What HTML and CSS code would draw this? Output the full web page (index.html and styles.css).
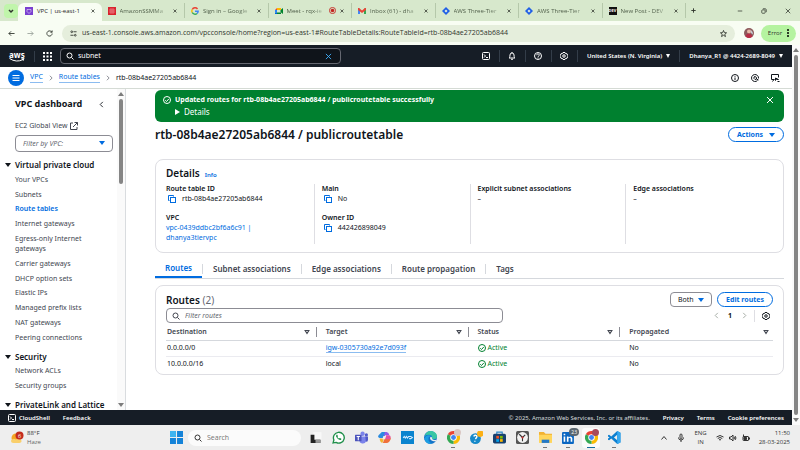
FILE: index.html
```
<!DOCTYPE html>
<html lang="en">
<head>
    <meta charset="UTF-8">
    <meta name="viewport" content="width=device-width, initial-scale=1.0">
    <title>VPC | us-east-1</title>
    <link rel="stylesheet" href="styles.css">
</head>
<body>
    <!-- shared icons -->
    <svg class="sprite" aria-hidden="true">
        <symbol id="i-close" viewBox="0 0 16 16"><path d="M2 2l12 12M14 2L2 14"/></symbol>
        <symbol id="i-search" viewBox="0 0 16 16"><circle cx="7" cy="7" r="5"/><path d="M11 11l4 4"/></symbol>
        <symbol id="i-right" viewBox="0 0 16 16"><path d="M5 2l6 6-6 6"/></symbol>
        <symbol id="i-left" viewBox="0 0 16 16"><path d="M11 2L5 8l6 6"/></symbol>
        <symbol id="i-gear" viewBox="0 0 16 16"><path d="M6 1h4l1 2 3 .5 1.500 3.500-1 1 1 1-1.500 3.500-3 .5-1 2H6l-1-2-3-.5L.5 9l1-1-1-1L2 3.500 5 3z"/><circle cx="8" cy="8" r="2.500"/></symbol>
        <symbol id="i-shell" viewBox="0 0 16 16"><rect x="1" y="1" width="14" height="14" rx="2"/><path d="M4 5l3 3-3 3M8 11h4"/></symbol>
        <symbol id="i-copy" viewBox="0 0 16 16"><path d="M3 11H1V1h10v2"/><rect x="5" y="5" width="10" height="10"/></symbol>
        <symbol id="i-check" viewBox="0 0 16 16"><circle cx="8" cy="8" r="7"/><path d="M4.500 8.500L7 11l4.500-5"/></symbol>
        <symbol id="i-sort" viewBox="0 0 16 16"><path d="M3 4h10l-5 8z"/></symbol>
        <symbol id="i-chrome" viewBox="0 0 16 16">
            <path fill="#ea4335" d="M8 8L1.070 4A8 8 0 0 1 14.930 4z"/>
            <path fill="#fbbc04" d="M8 8l6.930-4A8 8 0 0 1 8 16z"/>
            <path fill="#34a853" d="M8 8v8A8 8 0 0 1 1.070 4z"/>
            <circle cx="8" cy="8" r="4" fill="#fff"/><circle cx="8" cy="8" r="3" fill="#4285f4"/>
        </symbol>
        <symbol id="i-jira" viewBox="0 0 16 16"><path fill="#1f5fe6" d="M8 0l8 8-8 8-8-8z"/><path fill="#e4f0e0" d="M8 5l3 3-3 3-3-3z"/></symbol>
    </svg>

    <!-- browser tabs -->
    <header class="tab-strip">
        <button class="tab-search" aria-label="Search tabs"><svg class="icon bold" viewBox="0 0 16 16"><path d="M4 6l4 4 4-4"/></svg></button>
        <div class="browser-tabs">
            <div class="browser-tab current">
                <svg class="favicon" viewBox="0 0 16 16"><rect width="16" height="16" fill="#7a3fd0"/><path d="M4 5h8v4l-4 4-4-4z" fill="none" stroke="#fff"/></svg>
                <span>VPC | us-east-1</span>
                <button aria-label="Close"><svg class="icon bold"><use href="#i-close"/></svg></button>
            </div>
            <div class="browser-tab">
                <svg class="favicon" viewBox="0 0 16 16"><rect width="16" height="16" fill="#d9232e"/><path d="M4 4h8v8H4zM4 8h8M8 4v8" fill="none" stroke="#f6b0b5"/></svg>
                <span>AmazonSSMMa</span>
                <button aria-label="Close"><svg class="icon bold"><use href="#i-close"/></svg></button>
            </div>
            <div class="browser-tab">
                <svg class="favicon" viewBox="0 0 16 16" fill="none" stroke-width="3"><path stroke="#ea4335" d="M13 4A6.300 6.300 0 0 0 2.500 5"/><path stroke="#fbbc04" d="M2.500 5a6.300 6.300 0 0 0 0 6"/><path stroke="#34a853" d="M2.500 11a6.300 6.300 0 0 0 9.500 2"/><path stroke="#4285f4" d="M12 13a6 6 0 0 0 2.300-4.500H8"/></svg>
                <span>Sign in – Google</span>
                <button aria-label="Close"><svg class="icon bold"><use href="#i-close"/></svg></button>
            </div>
            <div class="browser-tab">
                <svg class="favicon" viewBox="0 0 16 16"><path fill="#00832d" d="M3 11h9v3H3zM11 6l5-4v12l-5-4z"/><path fill="#ffba00" d="M4 2h8v4H4z"/><path fill="#2684fc" d="M0 6h4v5H0z"/><path fill="#ea4335" d="M4 2v4H0z"/><path fill="#0066da" d="M0 11h4v3H0z"/></svg>
                <span>Meet - rqx-ie</span>
                <svg class="rec" viewBox="0 0 16 16"><circle cx="8" cy="8" r="7" fill="none" stroke="#c5221f" stroke-width="2"/><circle cx="8" cy="8" r="4" fill="#c5221f"/></svg>
                <button aria-label="Close"><svg class="icon bold"><use href="#i-close"/></svg></button>
            </div>
            <div class="browser-tab">
                <svg class="favicon" viewBox="0 0 16 16"><path fill="#4285f4" d="M0 3h4v11H0z"/><path fill="#34a853" d="M12 3h4v11h-4z"/><path fill="#ea4335" d="M0 2h2l6 5 6-5h2v4l-8 6-8-6z"/></svg>
                <span>Inbox (61) - dha</span>
                <button aria-label="Close"><svg class="icon bold"><use href="#i-close"/></svg></button>
            </div>
            <div class="browser-tab">
                <svg class="favicon"><use href="#i-jira"/></svg>
                <span>AWS Three-Tier</span>
                <button aria-label="Close"><svg class="icon bold"><use href="#i-close"/></svg></button>
            </div>
            <div class="browser-tab">
                <svg class="favicon"><use href="#i-jira"/></svg>
                <span>AWS Three-Tier</span>
                <button aria-label="Close"><svg class="icon bold"><use href="#i-close"/></svg></button>
            </div>
            <div class="browser-tab">
                <span class="favicon dev">DEV</span>
                <span>New Post - DEV</span>
                <button aria-label="Close"><svg class="icon bold"><use href="#i-close"/></svg></button>
            </div>
        </div>
        <button class="new-tab" aria-label="New tab"><svg class="icon bold" viewBox="0 0 16 16"><path d="M8 1v14M1 8h14"/></svg></button>
        <div class="window-buttons">
            <button aria-label="Minimize"><svg class="icon" viewBox="0 0 16 16"><path d="M2 8h12"/></svg></button>
            <button aria-label="Restore"><svg class="icon" viewBox="0 0 16 16"><rect x="2" y="5" width="9" height="9" rx="2"/><path d="M5 2h6q3 0 3 3v6"/></svg></button>
            <button aria-label="Close window"><svg class="icon"><use href="#i-close"/></svg></button>
        </div>
    </header>

    <div class="address-bar">
        <button aria-label="Back"><svg class="icon" viewBox="0 0 16 16"><path d="M15 8H2M7 3L2 8l5 5"/></svg></button>
        <button class="disabled" aria-label="Forward"><svg class="icon" viewBox="0 0 16 16"><path d="M1 8h13M9 3l5 5-5 5"/></svg></button>
        <button aria-label="Reload"><svg class="icon" viewBox="0 0 16 16"><path d="M14 8a6 6 0 1 1-2-4.500L14 5M14 1v4h-4"/></svg></button>
        <div class="url">
            <svg class="icon" viewBox="0 0 16 16"><circle cx="4" cy="4" r="2"/><path d="M8 4h7M1 12h7"/><circle cx="12" cy="12" r="2"/></svg>
            <input type="text" aria-label="Address" value="us-east-1.console.aws.amazon.com/vpcconsole/home?region=us-east-1#RouteTableDetails:RouteTableId=rtb-08b4ae27205ab6844">
            <svg class="icon" viewBox="0 0 16 16"><path d="M8 1l2 5 5 .4-4 3.300L12.500 15 8 12l-4.500 3L5 9.700 1 6.400 6 6z"/></svg>
        </div>
        <svg class="avatar" viewBox="0 0 20 20"><circle cx="10" cy="10" r="10" fill="#8d5a5c"/><circle cx="10" cy="7" r="4" fill="#e7b9a6"/><path d="M3 17q2-7 7-6t7 6q-7 6-14 0z" fill="#b72d45"/><path d="M13 3q5 4 5 10l-4-3z" fill="#c6ced6"/></svg>
        <button class="error-button">Error <svg viewBox="0 0 4 16"><circle cx="2" cy="2" r="2"/><circle cx="2" cy="8" r="2"/><circle cx="2" cy="14" r="2"/></svg></button>
    </div>

    <div class="viewport">
        <div class="console">
            <nav class="aws-nav">
                <a class="aws-logo" href="#" aria-label="AWS home">
                    <span>aws</span>
                    <svg viewBox="0 0 32 8"><path d="M1 1q14 9 27 2" fill="none" stroke="#fff" stroke-width="2"/><path d="M24 1l7-1-2 6z" fill="#fff"/></svg>
                </a>
                <button class="services" aria-label="Services">
                    <svg viewBox="0 0 18 18"><path d="M0 0h4v4H0zM7 0h4v4H7zM14 0h4v4h-4zM0 7h4v4H0zM7 7h4v4H7zM14 7h4v4h-4zM0 14h4v4H0zM7 14h4v4H7zM14 14h4v4h-4z"/></svg>
                </button>
                <div class="aws-search">
                    <svg class="icon"><use href="#i-search"/></svg>
                    <input type="text" aria-label="Search services" value="subnet">
                    <button aria-label="Clear"><svg class="icon"><use href="#i-close"/></svg></button>
                </div>
                <div class="aws-tools">
                    <button aria-label="CloudShell"><svg class="icon"><use href="#i-shell"/></svg></button>
                    <button aria-label="Notifications"><svg class="icon" viewBox="0 0 16 16"><path d="M3 11q1-2 1-5a4 4 0 0 1 8 0q0 3 1 5l1 1H2zM6 14.500h4M8 0v2"/></svg></button>
                    <button aria-label="Help"><svg class="icon" viewBox="0 0 16 16"><circle cx="8" cy="8" r="7"/><path d="M5.500 6.500a2.500 2.500 0 1 1 3.500 2q-1 .5-1 1.500M8 11v2"/></svg></button>
                    <button aria-label="Settings"><svg class="icon"><use href="#i-gear"/></svg></button>
                    <button class="menu">United States (N. Virginia)<i class="caret"></i></button>
                    <button class="menu">Dhanya_R1 @ 4424-2689-8049<i class="caret"></i></button>
                </div>
            </nav>

            <div class="breadcrumbs">
                <button class="menu-toggle" aria-label="Open navigation"><svg class="icon" viewBox="0 0 16 16"><path d="M1 3h14M1 8h14M1 13h14"/></svg></button>
                <a href="#">VPC</a>
                <svg class="icon"><use href="#i-right"/></svg>
                <a href="#">Route tables</a>
                <svg class="icon"><use href="#i-right"/></svg>
                <span>rtb-08b4ae27205ab6844</span>
                <div class="page-tools">
                    <button aria-label="Info"><svg class="icon" viewBox="0 0 16 16"><circle cx="8" cy="8" r="7"/><path d="M8 7v5M8 4v1.500"/></svg></button>
                    <button aria-label="Resources"><svg class="icon" viewBox="0 0 16 16"><path d="M13 13A7 7 0 1 1 15 9M8 5l3 2v3l-3 1-2-2V6zM15 12l-4-2"/></svg></button>
                    <button aria-label="Tools"><svg class="icon" viewBox="0 0 16 16"><path d="M7 11H1V1h14v6M3 15l3-4M9 8v5l2-2h4zM13 15h4"/></svg></button>
                </div>
            </div>

            <div class="workspace">
                <aside class="sidebar">
                    <div class="sidebar-content">
                        <div class="sidebar-title">
                            <h2>VPC dashboard</h2>
                            <button aria-label="Collapse"><svg class="icon"><use href="#i-left"/></svg></button>
                        </div>
                        <a class="global-view" href="#">EC2 Global View <svg class="icon" viewBox="0 0 16 16"><path d="M6 2H1v13h13v-5M9 1h6v6M15 1L6 10"/></svg></a>
                        <div class="select vpc-filter">
                            <select aria-label="Filter by VPC"><option>Filter by VPC:</option></select>
                        </div>
                        <nav class="side-nav">
                            <h3>Virtual private cloud</h3>
                            <ul>
                                <li><a href="#">Your VPCs</a></li>
                                <li><a href="#">Subnets</a></li>
                                <li><a class="active" href="#">Route tables</a></li>
                                <li><a href="#">Internet gateways</a></li>
                                <li><a href="#">Egress-only Internet gateways</a></li>
                                <li><a href="#">Carrier gateways</a></li>
                                <li><a href="#">DHCP option sets</a></li>
                                <li><a href="#">Elastic IPs</a></li>
                                <li><a href="#">Managed prefix lists</a></li>
                                <li><a href="#">NAT gateways</a></li>
                                <li><a href="#">Peering connections</a></li>
                            </ul>
                            <h3>Security</h3>
                            <ul>
                                <li><a href="#">Network ACLs</a></li>
                                <li><a href="#">Security groups</a></li>
                            </ul>
                            <h3>PrivateLink and Lattice</h3>
                        </nav>
                    </div>
                    <div class="scrollbar side-scroll"><i class="up"></i><i class="thumb"></i><i class="down"></i></div>
                </aside>

                <main class="content">
                    <div class="flash">
                        <svg class="icon"><use href="#i-check"/></svg>
                        <div class="flash-text">
                            <strong>Updated routes for rtb-08b4ae27205ab6844 / publicroutetable successfully</strong>
                            <button>Details</button>
                        </div>
                        <button aria-label="Dismiss"><svg class="icon"><use href="#i-close"/></svg></button>
                    </div>

                    <div class="page-header">
                        <h1>rtb-08b4ae27205ab6844 / publicroutetable</h1>
                        <button class="button">Actions<i class="caret"></i></button>
                    </div>

                    <section class="card details">
                        <div class="card-title"><h2>Details</h2><a href="#">Info</a></div>
                        <div class="detail-grid">
                            <dl>
                                <dt>Route table ID</dt>
                                <dd><svg class="icon copy"><use href="#i-copy"/></svg>rtb-08b4ae27205ab6844</dd>
                                <dt>VPC</dt>
                                <dd><a href="#">vpc-0439ddbc2bf6a6c91 |<br>dhanya3tiervpc</a></dd>
                            </dl>
                            <dl>
                                <dt>Main</dt>
                                <dd><svg class="icon copy"><use href="#i-copy"/></svg>No</dd>
                                <dt>Owner ID</dt>
                                <dd><svg class="icon copy"><use href="#i-copy"/></svg>442426898049</dd>
                            </dl>
                            <dl>
                                <dt>Explicit subnet associations</dt>
                                <dd>–</dd>
                            </dl>
                            <dl>
                                <dt>Edge associations</dt>
                                <dd>–</dd>
                            </dl>
                        </div>
                    </section>

                    <div class="tabs" role="tablist">
                        <button class="active" role="tab">Routes</button>
                        <button role="tab">Subnet associations</button>
                        <button role="tab">Edge associations</button>
                        <button role="tab">Route propagation</button>
                        <button role="tab">Tags</button>
                    </div>

                    <section class="card routes">
                        <div class="routes-header">
                            <h2>Routes <span>(2)</span></h2>
                            <div class="select both">
                                <select aria-label="Route type"><option>Both</option></select>
                            </div>
                            <button class="button">Edit routes</button>
                        </div>
                        <div class="routes-filter">
                            <div class="filter-input">
                                <svg class="icon"><use href="#i-search"/></svg>
                                <input type="text" aria-label="Filter routes" placeholder="Filter routes">
                            </div>
                            <div class="pager">
                                <button class="disabled" aria-label="Previous"><svg class="icon"><use href="#i-left"/></svg></button>
                                <button>1</button>
                                <button class="disabled" aria-label="Next"><svg class="icon"><use href="#i-right"/></svg></button>
                                <button class="prefs" aria-label="Preferences"><svg class="icon"><use href="#i-gear"/></svg></button>
                            </div>
                        </div>
                        <table>
                            <thead>
                                <tr>
                                    <th><div>Destination<svg class="icon bold"><use href="#i-sort"/></svg></div></th>
                                    <th><div>Target<svg class="icon bold"><use href="#i-sort"/></svg></div></th>
                                    <th><div>Status<svg class="icon bold"><use href="#i-sort"/></svg></div></th>
                                    <th><div>Propagated<svg class="icon bold"><use href="#i-sort"/></svg></div></th>
                                </tr>
                            </thead>
                            <tbody>
                                <tr>
                                    <td>0.0.0.0/0</td>
                                    <td><a href="#">igw-0305730a92e7d093f</a></td>
                                    <td><span class="status"><svg class="icon"><use href="#i-check"/></svg>Active</span></td>
                                    <td>No</td>
                                </tr>
                                <tr>
                                    <td>10.0.0.0/16</td>
                                    <td>local</td>
                                    <td><span class="status"><svg class="icon"><use href="#i-check"/></svg>Active</span></td>
                                    <td>No</td>
                                </tr>
                            </tbody>
                        </table>
                    </section>
                </main>
            </div>

            <footer class="aws-footer">
                <button><svg class="icon"><use href="#i-shell"/></svg>CloudShell</button>
                <button>Feedback</button>
                <span>© 2025, Amazon Web Services, Inc. or its affiliates.</span>
                <a href="#">Privacy</a>
                <a href="#">Terms</a>
                <a href="#">Cookie preferences</a>
            </footer>
        </div>
        <div class="scrollbar page-scroll"><i class="up"></i><i class="thumb"></i><i class="down"></i></div>
    </div>

    <!-- windows taskbar -->
    <footer class="taskbar">
        <div class="weather">
            <svg viewBox="0 0 28 28"><circle cx="12" cy="14" r="9" fill="#f5a623"/><path d="M2 19q4-6 10-2 6-5 10 0 3 6-3 7H7q-5 0-5-5z" fill="#f9cf6b"/><circle cx="19" cy="9" r="8" fill="#c42b1c"/><text x="19" y="13" font-size="11" text-anchor="middle" fill="#fff">6</text></svg>
            <div>88°F<br><span>Haze</span></div>
        </div>
        <div class="apps">
            <button class="app" aria-label="Start"><svg viewBox="0 0 24 24"><path fill="#1583d8" d="M0 0h11v11H0zM13 0h11v11H13zM0 13h11v11H0zM13 13h11v11H13z"/><path fill="#3fb4f0" d="M0 0h11v11H0z"/></svg></button>
            <div class="task-search"><svg class="icon"><use href="#i-search"/></svg><input type="text" aria-label="Search" placeholder="Search"></div>
            <button class="app" aria-label="Task view"><svg viewBox="0 0 24 24"><path fill="#f8f8f8" d="M8 2h15v14H8z"/><path fill="#222" d="M3 7h7v9h11v6H3z"/><path fill="#999" d="M12 16h9v6h-9z"/></svg></button>
            <button class="app" aria-label="WhatsApp"><svg viewBox="0 0 24 24"><path d="M2 22l1.500-5.500A10 10 0 1 1 7.500 21z" fill="#fff" stroke="#1f8f4a" stroke-width="2.500"/><path d="M8 7q-2 3 2 7t7 2l0-2-3-1-1 1q-2-1-3-3l1-1-1-3z" fill="#1f8f4a"/></svg></button>
            <button class="app" aria-label="Teams"><svg viewBox="0 0 24 24"><circle cx="14" cy="5" r="4" fill="#7b83eb"/><circle cx="21" cy="7" r="3" fill="#5059c9"/><path fill="#7b83eb" d="M8 10h13v8q-2 6-8 5-5-1-5-5z"/><path fill="#5059c9" d="M19 10h5v6q0 4-4 4z"/><rect y="7" width="12" height="12" rx="1" fill="#4b53bc"/><path d="M3 10h6M6 10v7" stroke="#fff" stroke-width="2"/></svg></button>
            <button class="app" aria-label="Copilot"><svg viewBox="0 0 24 24"><path fill="#2a8be0" d="M7 2h8l-4 11H3q-4-1-2-5z"/><path fill="#8f5be8" d="M13 2h3q4 1 5 6h-8l-3 3z"/><path fill="#f0703a" d="M17 22H9l4-11h8q4 1 2 5-2 5-6 6z"/><path fill="#f2b52e" d="M3 14h8l-3 8q-4 0-5-8z"/><path fill="#e452a0" d="M15 8h6q4 2 1 7h-9z"/><path fill="#eee" d="M10 9h5l-2 6H8z"/></svg></button>
            <button class="app" aria-label="Vendor app"><svg viewBox="0 0 24 24"><path fill="#0a84cf" d="M0 0h24v24H0z"/><path d="M4 13l2-3 2 3 2-3 2 3 2-3h4l3 2-3 2h-3" fill="none" stroke="#d3ecff" stroke-width="2"/></svg></button>
            <button class="app" aria-label="Edge"><svg viewBox="0 0 24 24"><circle cx="12" cy="12" r="12" fill="#1473c8"/><path d="M1 9Q5-1 14 0q10 2 10 10 0 5-6 5-4 0-3-3 0-5-6-5-5 0-8 2z" fill="#38c6a4"/><path d="M9 11q-3 9 6 12-11 2-14-8 1-7 8-7 5 0 6 4-3-3-6-1z" fill="#1b9de2"/><path d="M11 12q0 6 7 7h4l1-3q-9 2-8-4-2-2-4 0z" fill="#eee"/></svg></button>
            <button class="app open" aria-label="Chrome"><svg><use href="#i-chrome"/></svg><i class="mini"></i></button>
            <button class="app" aria-label="Support"><svg viewBox="0 0 24 24"><circle cx="10" cy="14" r="10" fill="#1689c9"/><path d="M7 10q1-3 4-2t1 4l-2 3M9 18v2" stroke="#fff" stroke-width="2.500" fill="none"/><circle cx="19" cy="5" r="6" fill="#fbb016"/></svg></button>
            <button class="app" aria-label="Store"><svg viewBox="0 0 24 24"><path d="M7 6V2h10v4" fill="none" stroke="#2b88c8" stroke-width="2"/><rect y="5" width="24" height="18" rx="3" fill="#17406f"/><path fill="#f25022" d="M6 9h5v5H6z"/><path fill="#7fba00" d="M13 9h5v5h-5z"/><path fill="#00a4ef" d="M6 15h5v5H6z"/><path fill="#ffb900" d="M13 15h5v5h-5z"/></svg></button>
            <button class="app" aria-label="Clock"><svg viewBox="0 0 24 24"><rect width="24" height="24" rx="3" fill="#555"/><circle cx="12" cy="12" r="10" fill="#f2f2f2"/><path d="M6 6l6 6 5-5M12 12v7" stroke="#333" stroke-width="2" fill="none"/><circle cx="12" cy="12" r="2" fill="#c33"/></svg></button>
            <button class="app open" aria-label="File Explorer"><svg viewBox="0 0 24 24"><path fill="#f2b233" d="M0 2h9l3 3h12v6H0z"/><path fill="#ffd55c" d="M0 7h24v15H0z"/><path fill="#2378c8" d="M5 16h14v6H5z"/></svg></button>
            <button class="app open" aria-label="LinkedIn"><svg viewBox="0 0 24 24"><rect y="2" width="22" height="22" rx="2" fill="#0a66c2"/><path fill="#fff" d="M3 10h3v10H3zM3 5h3v3H3zM9 10h3v2q5-4 7 1v7h-3v-6q-2-3-4 0v6H9z"/></svg><span class="badge">23</span></button>
            <button class="app open focused" aria-label="Chrome"><svg><use href="#i-chrome"/></svg><i class="mini red"></i></button>
            <button class="app open" aria-label="VS Code"><svg viewBox="0 0 24 24"><path fill="#0d7fd0" d="M17 0l6 3v18l-6 3L6 14l-4 3-2-1v-2l3-2-3-2V8l2-1 4 3zM17 7l-6 5 6 5z" fill-rule="evenodd"/><path fill="#36a9f0" d="M17 0l6 3v18l-6 3z"/></svg></button>
        </div>
        <div class="tray">
            <button aria-label="Hidden icons"><svg class="icon" viewBox="0 0 16 16"><path d="M3 11l5-6 5 6"/></svg></button>
            <svg class="icon" viewBox="0 0 16 16"><rect x="6" y="0" width="4" height="9" rx="2"/><path d="M3 7q0 5 5 5t5-5M8 12v4"/></svg>
            <span class="lang">ENG<br>IN</span>
            <div class="tray-group">
                <svg class="icon" viewBox="0 0 16 16"><path d="M1 6q7-6 14 0M3.500 9q4.500-4 9 0M6 12q2-2 4 0"/></svg>
                <svg class="icon" viewBox="0 0 16 16"><path d="M1 6h3l4-4v12l-4-4H1zM10 6q2 2 0 4M12 4q4 4 0 8"/></svg>
                <svg class="icon" viewBox="0 0 16 16"><rect x="2" y="5" width="11" height="8" rx="1"/><path d="M4 7h5v4H4z" fill="currentColor"/><path d="M15 7v4M3 1v5"/></svg>
            </div>
            <span class="clock">11:50<br>28-03-2025</span>
        </div>
    </footer>
</body>
</html>
```
FILE: styles.css
```
* {
    box-sizing: border-box;
}
body {
    margin: 0;
    height: 100vh;
    display: flex;
    flex-direction: column;
    overflow: hidden;
    background: #fff;
    color: #0f141a;
    font-family: "Noto Sans", "Open Sans", sans-serif;
    font-size: 7px;
    line-height: 10px;
}
h1, h2, h3, ul, dl, dd {
    margin: 0;
    padding: 0;
}
h1, h2, h3 {
    font-weight: 600;
}
ul {
    list-style: none;
}
button, input, select {
    margin: 0;
    padding: 0;
    border: 0;
    background: none;
    color: inherit;
    font: inherit;
}
input, select {
    min-width: 0;
    outline: none;
}
button {
    display: flex;
    align-items: center;
    justify-content: center;
    white-space: nowrap;
    cursor: pointer;
}
a {
    color: #006ce0;
    text-decoration: none;
}
.sprite {
    display: none;
}
.icon {
    width: 8px;
    height: 8px;
    flex: none;
    fill: none;
    stroke: currentColor;
    stroke-width: 2;
    overflow: visible;
}
.icon.bold {
    stroke-width: 3;
}
.disabled {
    color: #9aa29a;
}
.caret {
    border: 3px solid transparent;
    border-top: 5px solid currentColor;
    border-bottom: 0;
}

/* browser chrome */
.tab-strip {
    display: flex;
    align-items: center;
    flex: none;
    height: 21px;
    padding-left: 4px;
    background: #d7e8cc;
    color: #30362e;
    font-family: "Open Sans", sans-serif;
    font-size: 6px;
}
.tab-search {
    width: 14px;
    height: 14px;
    border-radius: 4px;
    background: #c0f5ab;
}
.browser-tabs {
    display: flex;
    flex: 0 1 668px;
    align-self: stretch;
    min-width: 0;
}
.browser-tab {
    display: flex;
    align-items: center;
    flex: 1 1 0;
    min-width: 0;
    margin-top: 3px;
    margin-bottom: 3px;
    padding: 0 7px 0 6px;
    gap: 4px;
    border-right: 1px solid #b5c8aa;
}
.browser-tab.current {
    margin-bottom: 0;
    padding-left: 7px;
    padding-bottom: 3px;
    border: 0;
    border-radius: 6px 6px 0 0;
    background: #f8fdf3;
}
.browser-tab .icon {
    width: 4px;
    height: 4px;
}
.browser-tab span:not(.favicon) {
    flex: 1;
    white-space: nowrap;
    color: #51604b;
    mask-image: linear-gradient(90deg, #000 70%, transparent);
}
.browser-tab.current span {
    color: #1d231b;
    mask-image: none;
}
.favicon {
    width: 8px;
    height: 8px;
    flex: none;
}
.dev {
    background: #111;
    color: #fff;
    font-size: 4px;
    font-weight: bold;
    line-height: 8px;
    text-align: center;
}
.rec {
    width: 7px;
    height: 7px;
    flex: none;
}
.new-tab {
    margin-left: 5px;
}
.new-tab .icon {
    width: 5px;
    height: 5px;
}
.window-buttons {
    display: flex;
    margin-left: auto;
}
.window-buttons button {
    width: 24px;
}
.window-buttons .icon {
    width: 6px;
    height: 6px;
}
.address-bar {
    display: flex;
    align-items: center;
    flex: none;
    height: 24px;
    padding: 0 4px 0 2px;
    background: #f8fdf3;
    color: #30362e;
    font-family: "Open Sans", sans-serif;
}
.address-bar > button:not(.error-button) {
    width: 19px;
}
.address-bar .icon {
    width: 7px;
    height: 7px;
}
.url {
    display: flex;
    align-items: center;
    flex: 1;
    height: 17px;
    margin-left: 3px;
    padding: 0 8px;
    gap: 5px;
    border-radius: 9px;
    background: #e5eedc;
}
.url input {
    flex: 1;
}
.avatar {
    width: 10px;
    height: 10px;
    margin: 0 7px 0 9px;
}
.error-button {
    width: 35px;
    height: 17px;
    gap: 5px;
    border-radius: 9px;
    background: #b5f3a0;
    font-size: 6px;
}
.error-button svg {
    width: 2px;
    height: 8px;
}

/* page area */
.viewport {
    display: flex;
    flex: 1;
    min-height: 0;
}
.console {
    display: flex;
    flex-direction: column;
    flex: 1;
    min-width: 0;
}
.scrollbar {
    display: flex;
    flex-direction: column;
    align-items: center;
    flex: none;
    width: 8px;
    padding: 3px 0;
    background: #fafafa;
}
.scrollbar i {
    border: 3px solid transparent;
}
.scrollbar .up {
    border-top: 0;
    border-bottom: 4px solid #7c7c7c;
}
.scrollbar .down {
    margin-top: auto;
    border-top: 4px solid #7c7c7c;
    border-bottom: 0;
}
.scrollbar .thumb {
    width: 4px;
    margin-top: 3px;
    border: 0;
    border-radius: 2px;
    background: #858585;
}
.page-scroll .thumb {
    flex: 1;
    margin-bottom: 3px;
}
.side-scroll .thumb {
    flex: 0 0 27%;
}

.aws-nav {
    display: flex;
    align-items: center;
    flex: none;
    height: 22px;
    padding-left: 9px;
    background: #161d26;
    color: #fff;
}
.aws-logo {
    display: flex;
    flex-direction: column;
    width: 26px;
    border-right: 1px solid #333d49;
    color: #fff;
    font-size: 8px;
    font-weight: bold;
    line-height: 7px;
}
.aws-logo svg {
    width: 16px;
    height: 4px;
}
.services {
    width: 25px;
}
.services svg {
    width: 9px;
    height: 9px;
    fill: #fff;
}
.aws-search {
    display: flex;
    align-items: center;
    flex: 0 1 281px;
    height: 16px;
    padding: 0 8px 0 5px;
    gap: 4px;
    border: 1px solid #656871;
    border-radius: 4px;
    background: #0f141a;
}
.aws-search input {
    flex: 1;
}
.aws-search button {
    color: #42b4ff;
}
.aws-search button .icon {
    width: 7px;
    height: 7px;
}
.aws-tools {
    display: flex;
    margin-left: auto;
    font-size: 6px;
    font-weight: 600;
}
.aws-tools button {
    width: 26px;
    height: 12px;
    border-right: 1px solid #333d49;
}
.aws-tools .menu {
    width: auto;
    padding: 0 9px;
    gap: 4px;
}
.aws-tools .menu:last-child {
    border: 0;
}
.aws-tools .caret {
    border-width: 4px 2px 0;
}

.breadcrumbs {
    display: flex;
    align-items: center;
    flex: none;
    height: 22px;
    padding: 0 13px 0 8px;
    gap: 5px;
    border-bottom: 1px solid #d5dbd5;
}
.breadcrumbs a {
    border-bottom: 1px solid #8bbcf0;
}
.breadcrumbs > .icon {
    width: 6px;
    height: 6px;
    color: #656871;
}
.menu-toggle {
    width: 16px;
    height: 16px;
    margin-right: 1px;
    border-radius: 50%;
    background: #006ce0;
    color: #fff;
}
.page-tools {
    display: flex;
    gap: 12px;
    margin-left: auto;
}

.workspace {
    display: flex;
    flex: 1;
    min-height: 0;
}
.sidebar {
    display: flex;
    flex: none;
    width: 126px;
    border-right: 1px solid #d9dcdf;
}
.sidebar-content {
    display: flex;
    flex-direction: column;
    flex: 1;
    padding: 8px 4px 0 15px;
}
.sidebar-title {
    display: flex;
    align-items: center;
    justify-content: space-between;
    height: 14px;
    padding-right: 8px;
}
.sidebar-title h2 {
    font-size: 9px;
    font-weight: bold;
}
.sidebar-title .icon {
    width: 7px;
    height: 7px;
}
.global-view {
    display: flex;
    align-items: center;
    gap: 3px;
    margin-top: 10px;
    color: #424650;
}
.select {
    position: relative;
}
.select select {
    display: block;
    width: 100%;
    height: 15px;
    padding: 0 7px;
    border: 1px solid #8c8c94;
    border-radius: 4px;
    appearance: none;
}
.select::after {
    content: "";
    position: absolute;
    top: 6px;
    right: 8px;
    border: 3px solid transparent;
    border-top: 4px solid #006ce0;
    border-bottom: 0;
    pointer-events: none;
}
.vpc-filter {
    margin: 4px 0 8px;
}
.vpc-filter select {
    height: 17px;
    color: #656871;
    font-style: italic;
}
.side-nav {
    display: flex;
    flex-direction: column;
    justify-content: space-between;
    flex: 1;
    margin-left: -10px;
}
.side-nav ul {
    display: contents;
}
.side-nav li {
    padding-left: 10px;
}
.side-nav a {
    color: #424650;
}
.side-nav a.active {
    color: #006ce0;
    font-weight: 600;
}
.side-nav h3 {
    display: flex;
    align-items: center;
    margin-top: 4px;
    gap: 4px;
    font-size: 8px;
    white-space: nowrap;
}
.side-nav h3:first-child {
    margin-top: 0;
}
.side-nav h3::before {
    content: "";
    border: 3px solid transparent;
    border-top: 4px solid #0f141a;
    border-bottom: 0;
}

.content {
    flex: 1;
    min-width: 0;
    padding: 1px 8px 0 29px;
}
.flash {
    display: flex;
    align-items: flex-start;
    padding: 5px 10px 5px 8px;
    gap: 4px;
    border-radius: 6px;
    background: #00802f;
    color: #fff;
}
.flash .icon {
    margin-top: 1px;
}
.flash-text {
    flex: 1;
}
.flash-text button {
    margin-top: 2px;
    gap: 4px;
    font-size: 8px;
}
.flash-text button::before {
    content: "";
    border: 3px solid transparent;
    border-left: 5px solid #fff;
    border-right: 0;
}
.page-header {
    display: flex;
    align-items: center;
    justify-content: space-between;
    margin: 5px 0 17px;
}
.page-header h1 {
    font-size: 12px;
    line-height: 15px;
}
.button {
    height: 15px;
    padding: 0 8px;
    gap: 6px;
    border: 1px solid #006ce0;
    border-radius: 8px;
    color: #006ce0;
    font-weight: bold;
}
.button .caret {
    border-width: 4px 3px 0;
}
.card {
    border: 1px solid #dedee3;
    border-radius: 8px;
}
.card h2 {
    font-size: 10px;
    line-height: 14px;
}
.card-title {
    display: flex;
    align-items: baseline;
    gap: 5px;
    padding: 6px 10px 4px;
}
.card-title a {
    font-size: 6px;
    font-weight: 600;
}
.detail-grid {
    display: grid;
    grid-template-columns: repeat(4, 1fr);
    margin: 0 2px 8px;
}
.detail-grid dl {
    min-height: 60px;
    padding: 0 8px;
}
.detail-grid dl + dl {
    padding-left: 7px;
    border-left: 1px solid #dedee3;
}
.detail-grid dt {
    font-weight: 600;
}
.detail-grid dd {
    display: flex;
    align-items: center;
}
.detail-grid dd + dt {
    margin-top: 9px;
}
.copy {
    margin: 0 6px 0 2px;
    color: #006ce0;
}
.tabs {
    display: flex;
    align-items: center;
    height: 20px;
    margin: 6px 0;
    border-bottom: 1px solid #d5d8dd;
    font-size: 8px;
    font-weight: 600;
    color: #424650;
}
.tabs button {
    padding: 0 10px;
    border-left: 1px solid #d5d8dd;
}
.tabs button.active {
    align-self: stretch;
    border: 0;
    border-bottom: 2px solid #006ce0;
    color: #006ce0;
}
.routes {
    padding: 6px 10px 2px;
}
.routes-header {
    display: flex;
    align-items: center;
    gap: 5px;
}
.routes-header h2 {
    flex: 1;
}
.routes-header h2 span {
    color: #656871;
    font-weight: normal;
}
.both select {
    width: 42px;
}
.routes-filter {
    display: flex;
    align-items: center;
    justify-content: space-between;
    margin: 1px 0;
}
.filter-input {
    display: flex;
    align-items: center;
    flex: 0 1 337px;
    height: 15px;
    padding: 0 5px;
    gap: 5px;
    border: 1px solid #8c8c94;
    border-radius: 4px;
    color: #424650;
}
.filter-input input {
    flex: 1;
}
.filter-input input::placeholder {
    color: #656871;
    font-style: italic;
}
.pager {
    display: flex;
    align-items: center;
    font-weight: bold;
}
.pager button {
    width: 14px;
}
.pager .prefs {
    width: 19px;
    height: 12px;
    margin-left: 3px;
    padding-left: 4px;
    border-left: 1px solid #dedee3;
}
.pager .disabled .icon {
    width: 7px;
    height: 7px;
}
table {
    width: 100%;
    table-layout: fixed;
    border-collapse: collapse;
}
th, td {
    height: 16px;
    padding: 0 1px;
    text-align: left;
}
th + th, td + td {
    padding-left: 8px;
}
tr + tr {
    border-top: 1px solid #ebebf0;
}
thead tr {
    border-bottom: 1px solid #d5d8dd;
}
th {
    color: #424650;
    font-weight: 600;
}
th div {
    display: flex;
    align-items: center;
    justify-content: space-between;
    padding-right: 6px;
    border-right: 1px solid #8c8c94;
}
th:last-child div {
    padding-right: 3px;
    border: 0;
}
th .icon {
    width: 6px;
    height: 6px;
}
td a {
    border-bottom: 1px solid #8bbcf0;
}
.status {
    display: flex;
    align-items: center;
    gap: 2px;
    color: #00802f;
}

.aws-footer {
    display: flex;
    align-items: center;
    flex: none;
    height: 15px;
    padding: 0 8px;
    gap: 13px;
    background: #161d26;
    color: #fff;
    font-size: 6px;
}
.aws-footer button {
    gap: 3px;
    font-weight: 600;
}
.aws-footer span {
    margin-left: auto;
    color: #d5dbdb;
}
.aws-footer a {
    color: #fff;
    font-weight: 600;
}

/* taskbar */
.taskbar {
    display: flex;
    align-items: center;
    justify-content: space-between;
    flex: none;
    height: 25px;
    padding: 0 10px;
    background: #eee;
    color: #333;
    font-family: "Open Sans", sans-serif;
    font-size: 6px;
    line-height: 9px;
}
.weather {
    display: flex;
    align-items: center;
    gap: 3px;
    width: 160px;
}
.weather svg {
    width: 14px;
    height: 14px;
}
.weather span {
    color: #666;
}
.apps {
    display: flex;
    align-items: center;
    flex: 1;
    gap: 5px;
}
.app {
    position: relative;
    width: 18px;
    height: 20px;
    border-radius: 3px;
}
.app:first-child {
    width: 13px;
}
.app svg {
    width: 13px;
    height: 13px;
}
.app.open::after {
    content: "";
    position: absolute;
    bottom: 0;
    left: 50%;
    width: 4px;
    height: 1px;
    margin-left: -2px;
    background: #777;
}
.app.focused {
    background: #fbfbfb;
}
.app.focused::after {
    width: 8px;
    margin-left: -4px;
    background: #176b9e;
}
.mini {
    position: absolute;
    top: 1px;
    right: 1px;
    width: 7px;
    height: 7px;
    border-radius: 50%;
    background: #d9c7c3;
}
.mini.red {
    background: #a94b5b;
}
.badge {
    position: absolute;
    top: 0;
    right: -2px;
    padding: 0 2px;
    border-radius: 4px;
    background: #5b6770;
    color: #fff;
    font-size: 5px;
    line-height: 8px;
}
.task-search {
    display: flex;
    align-items: center;
    width: 113px;
    height: 16px;
    padding: 0 6px;
    gap: 5px;
    border-radius: 8px;
    background: #fbfbfb;
    font-size: 7px;
}
.task-search input {
    flex: 1;
}
.tray {
    display: flex;
    align-items: center;
    gap: 9px;
}
.tray-group {
    display: flex;
    gap: 5px;
}
.lang {
    text-align: center;
}
.clock {
    text-align: right;
}
```
